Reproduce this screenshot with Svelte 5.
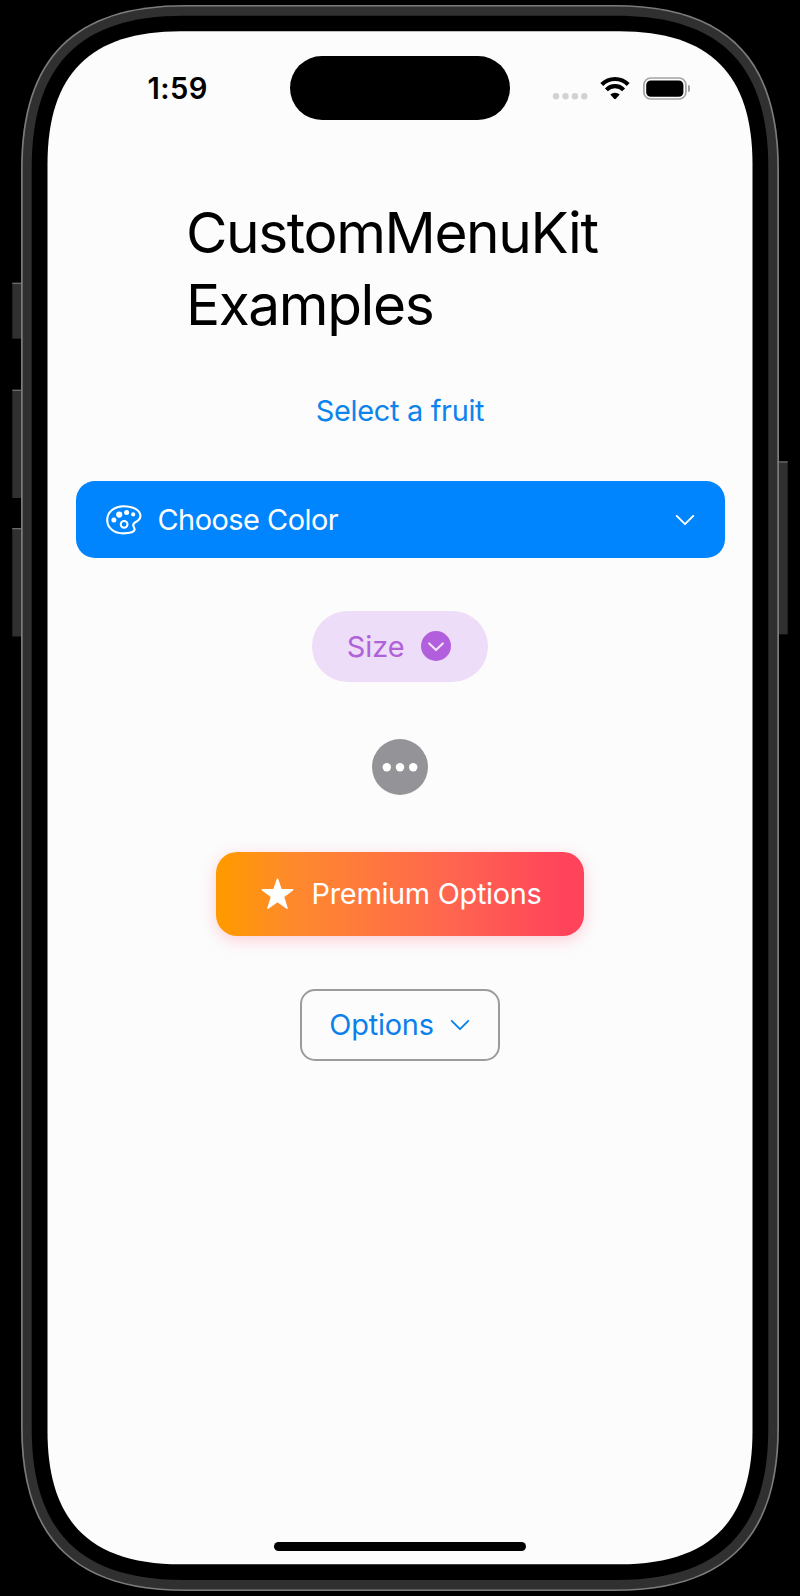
<script>
  // Rounded rectangle with smooth, slightly extended corners
  function squircle(x0, y0, x1, y1, r) {
    const e = r * 1.2;
    const h = e * (1 - 0.68);
    return [
      `M${x0} ${y0 + e}`,
      `C${x0} ${y0 + h} ${x0 + h} ${y0} ${x0 + e} ${y0}`,
      `L${x1 - e} ${y0}`,
      `C${x1 - h} ${y0} ${x1} ${y0 + h} ${x1} ${y0 + e}`,
      `L${x1} ${y1 - e}`,
      `C${x1} ${y1 - h} ${x1 - h} ${y1} ${x1 - e} ${y1}`,
      `L${x0 + e} ${y1}`,
      `C${x0 + h} ${y1} ${x0} ${y1 - h} ${x0} ${y1 - e}`,
      'Z'
    ].join(' ');
  }

  const sideButtons = [
    { x: 12.3, y: 282.7, w: 10, h: 56 },
    { x: 12.3, y: 389.7, w: 10, h: 108.3 },
    { x: 12.3, y: 528, w: 10, h: 108.5 },
    { x: 777.7, y: 461.3, w: 10, h: 173 }
  ];
</script>

<div class="device">
  <svg class="frame" width="800" height="1596" viewBox="0 0 800 1596" aria-hidden="true">
    {#each sideButtons as b}
      <rect x={b.x} y={b.y} width={b.w} height={b.h} fill="#303030" />
      <rect x={b.x} y={b.y} width={b.w} height="1.3" fill="#6a6a6a" />
    {/each}
    <path d={squircle(21, 5, 779, 1591, 137)} fill="#7c7c7c" />
    <path d={squircle(22.7, 6.5, 777.3, 1589.5, 135.5)} fill="#303030" />
    <path d={squircle(31.7, 15.7, 768.3, 1580, 126.5)} fill="#000" />
    <path d={squircle(47.5, 31.2, 752.5, 1564.3, 111)} fill="#fcfcfc" />
  </svg>

  <div class="screen">
    <header class="status">
      <span class="time">1:59</span>
      <div class="island"></div>
      <svg class="signals" width="150" height="24" viewBox="0 0 150 24" aria-hidden="true">
        <g fill="#d2d2d4">
          <circle cx="16" cy="20.3" r="3.2" /><circle cx="25.5" cy="20.3" r="3.2" />
          <circle cx="34.9" cy="20.3" r="3.2" /><circle cx="44.3" cy="20.3" r="3.2" />
        </g>
        <g fill="none" stroke="#000" stroke-width="4.1">
          <path d="M61.8 8.5 A18.7 18.7 0 0 1 88.2 8.5" />
          <path d="M66.4 13.8 A11.9 11.9 0 0 1 83.6 13.8" />
        </g>
        <path d="M70.3 18.6 A6.8 6.8 0 0 1 79.7 18.6 L75.9 22.8 Q75 23.7 74.1 22.8 Z" fill="#000" />
        <rect x="103.9" y="2" width="42" height="21" rx="6.8" fill="none" stroke="#a4a4a4" stroke-width="1.7" />
        <rect x="106.2" y="4.4" width="37.2" height="16.4" rx="4.6" fill="#000" />
      </svg>
      <i class="nub"></i>
    </header>

    <main>
      <h1>CustomMenuKit<br />Examples</h1>

      <button class="plain"><span>Select a fruit</span></button>

      <button class="color">
        <svg width="36" height="30" viewBox="0 0 36 30" fill="none" aria-hidden="true">
          <path d="M17.6 1.2 C8.6 1.2 1.2 6.8 1.2 15 C1.2 23.2 8.3 28.4 17.3 28.4 C24.6 28.4 28.6 26.9 28.6 24.3 C28.6 22.6 27.2 21.7 27.2 20 C27.2 16 34.4 17.4 34.4 11.1 C34.4 5.1 27 1.2 17.6 1.2 Z" stroke="#fff" stroke-width="2.1" />
          <g fill="#fff">
            <circle cx="13.2" cy="9.6" r="3.1" /><circle cx="20.6" cy="7.6" r="2.5" />
            <circle cx="27.2" cy="9.4" r="2.1" /><circle cx="7.9" cy="14.9" r="2.5" />
          </g>
          <circle cx="18.1" cy="19.3" r="3.4" stroke="#fff" stroke-width="2" />
        </svg>
        <span>Choose Color</span>
        <svg class="chev" width="20" height="12" viewBox="0 0 20 12" fill="none" aria-hidden="true">
          <path d="M1.7 1.9 L10 10.2 L18.3 1.9" stroke="#fff" stroke-width="1.9" stroke-linecap="round" stroke-linejoin="round" />
        </svg>
      </button>

      <button class="size">
        <span>Size</span>
        <svg width="30" height="30" viewBox="0 0 30 30" fill="none" aria-hidden="true">
          <circle cx="15" cy="15" r="15" fill="#b15fdc" />
          <path d="M8.2 12.4 L15 19.1 L21.8 12.4" stroke="#f3e4fb" stroke-width="2.1" stroke-linecap="round" stroke-linejoin="round" />
        </svg>
      </button>

      <button class="more" aria-label="More">
        <svg width="56" height="56" viewBox="0 0 56 56" aria-hidden="true">
          <circle cx="28" cy="28" r="28" fill="#949498" />
          <g fill="#fff"><circle cx="14.8" cy="28.2" r="4.2" /><circle cx="28" cy="28.2" r="4.2" /><circle cx="41.2" cy="28.2" r="4.2" /></g>
        </svg>
      </button>

      <button class="premium">
        <svg width="33" height="32" viewBox="0 0 33 32" aria-hidden="true">
          <path d="M16.5 1.2 L20 11.6 L31.6 11.8 L22.4 18.7 L26 30.2 L16.5 23.3 L7 30.2 L10.6 18.7 L1.4 11.8 L13 11.6 Z" fill="#fff" stroke="#fff" stroke-width="1.6" stroke-linejoin="round" />
        </svg>
        <span>Premium Options</span>
      </button>

      <button class="options">
        <span>Options</span>
        <svg width="20" height="12" viewBox="0 0 20 12" fill="none" aria-hidden="true">
          <path d="M1.7 1.9 L10 10.2 L18.3 1.9" stroke="#0c80ea" stroke-width="1.9" stroke-linecap="round" stroke-linejoin="round" />
        </svg>
      </button>
    </main>

    <div class="home"></div>
  </div>
</div>

<style>
  :global(body) { background: #000; }
  .device {
    display: grid;
    width: 800px;
    height: 1596px;
    background: #000;
    font-family: Inter, "Liberation Sans", sans-serif;
    overflow: hidden;
  }
  .frame, .screen { grid-area: 1 / 1; }
  .screen {
    z-index: 1;
    display: flex;
    flex-direction: column;
    box-sizing: border-box;
    padding: 56px 47.5px 45.4px;
  }
  .status {
    display: flex;
    align-items: center;
    height: 64.4px;
  }
  .time {
    width: 142px;
    padding: 2px 0 0 100px;
    font-size: 29.2px;
    font-weight: 600;
    letter-spacing: 0.4px;
    line-height: 36px;
  }
  .island {
    width: 220.5px;
    height: 64.4px;
    border-radius: 33px;
    background: #000;
  }
  .signals { margin-left: 30px; }
  .nub {
    width: 2.6px;
    height: 7px;
    margin-left: -2.2px;
    border-radius: 0 3px 3px 0;
    background: #a0a0a0;
  }
  main {
    display: flex;
    flex: 1;
    flex-direction: column;
    align-items: center;
    gap: 52.6px;
    padding-top: 75.4px;
  }
  h1 {
    width: 428px;
    height: 143px;
    margin: 0;
    padding-top: 1px;
    color: #000;
    font-size: 56.8px;
    font-weight: 400;
    letter-spacing: -1.4px;
    line-height: 72px;
    white-space: nowrap;
  }
  button {
    display: flex;
    align-items: center;
    box-sizing: border-box;
    margin: 0;
    padding: 0;
    border: 0;
    background: none;
    font: 400 28.9px/36px Inter, "Liberation Sans", sans-serif;
    white-space: nowrap;
  }
  button span { padding-top: 1px; }
  svg { flex: none; display: block; }
  .plain { height: 36px; color: #0c84ec; letter-spacing: -0.3px; }
  .color {
    width: 649px;
    height: 77.2px;
    padding: 0 29.5px 0 30px;
    border-radius: 19px;
    background: #0085ff;
    color: #fff;
    letter-spacing: -0.5px;
  }
  .color span { margin-left: 16px; }
  .color .chev { margin-left: auto; }
  .size {
    width: 176.5px;
    height: 70.9px;
    padding: 0 37px 0 35px;
    justify-content: space-between;
    border-radius: 36px;
    background: #eeddf8;
    color: #b062d8;
  }
  .more { height: 65px; }
  .premium {
    width: 368px;
    height: 84.2px;
    padding-left: 45px;
    border-radius: 21px;
    background: linear-gradient(90deg, #ff9900 2%, #fe8a2c 20%, #ff6450 65%, #ff435b 95%);
    box-shadow: 0 4px 16px rgba(255, 60, 100, 0.24);
    color: #fff;
  }
  .premium span { margin-left: 17.6px; letter-spacing: -0.3px; }
  .options {
    width: 199.4px;
    height: 72px;
    padding: 0 28px 0 27px;
    justify-content: space-between;
    border: 2px solid #9c9c9c;
    border-radius: 15px;
    color: #0c80ea;
    letter-spacing: -0.2px;
  }
  .home {
    align-self: center;
    width: 252.6px;
    height: 8.6px;
    border-radius: 5px;
    background: #000;
  }
</style>
